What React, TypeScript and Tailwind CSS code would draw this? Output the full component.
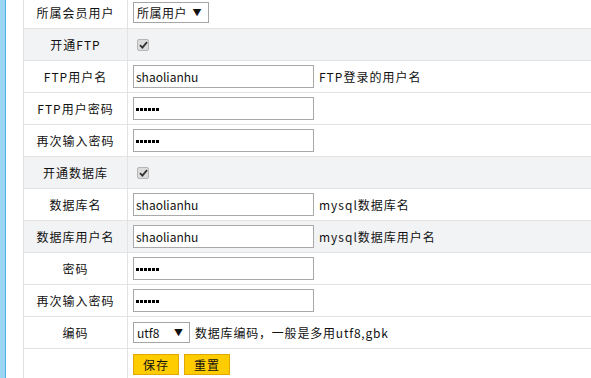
import React from 'react';

type Row = {
  label: string;
  kind: 'select' | 'check' | 'text' | 'password' | 'charset' | 'buttons';
  value?: string;
  hint?: string;
  gray?: boolean;
};

const rows: Row[] = [
  { label: '所属会员用户', kind: 'select', value: '所属用户' },
  { label: '开通FTP', kind: 'check', gray: true },
  { label: 'FTP用户名', kind: 'text', value: 'shaolianhu', hint: 'FTP登录的用户名' },
  { label: 'FTP用户密码', kind: 'password' },
  { label: '再次输入密码', kind: 'password' },
  { label: '开通数据库', kind: 'check', gray: true },
  { label: '数据库名', kind: 'text', value: 'shaolianhu', hint: 'mysql数据库名' },
  { label: '数据库用户名', kind: 'text', value: 'shaolianhu', hint: 'mysql数据库用户名', gray: true },
  { label: '密码', kind: 'password' },
  { label: '再次输入密码', kind: 'password' },
  { label: '编码', kind: 'charset', hint: '数据库编码，一般是多用utf8,gbk' },
  { label: '', kind: 'buttons' },
];

// tiny square dots like the old browser's password mask
const Dots = () => (
  <span className="flex gap-[1px] pt-[1px]">
    {[0, 1, 2, 3, 4, 5].map((d) => (
      <span key={d} className="h-[3px] w-[3px] bg-black" />
    ))}
  </span>
);

const Field: React.FC<{ row: Row }> = ({ row }) => {
  switch (row.kind) {
    case 'select':
      return (
        <div className="flex h-[21px] w-[76px] items-center justify-between border border-[#a5a5a5] bg-white pl-[3px] pr-[6px] tracking-[0.5px]">
          <span>{row.value}</span>
          <span className="text-[9px]">▼</span>
        </div>
      );
    case 'check':
      return (
        <span className="ml-[4px] flex h-[12px] w-[12px] items-center justify-center rounded-[2px] border border-[#b5b5b5] bg-[#dcdcdc]">
          <svg width="9" height="8" viewBox="0 0 9 8">
            <path d="M1 4.2 L3.4 6.6 L8 1.2" fill="none" stroke="#333" strokeWidth="1.8" />
          </svg>
        </span>
      );
    case 'text':
    case 'password':
      return (
        <div className="flex items-center">
          <div className="flex h-[23px] w-[181px] items-center border border-[#a9a9a9] bg-white px-[2px]">
            {row.kind === 'text' ? <span>{row.value}</span> : <Dots />}
          </div>
          {row.hint && <span className="ml-[5px] tracking-[1px]">{row.hint}</span>}
        </div>
      );
    case 'charset':
      return (
        <div className="flex items-center">
          <div className="flex h-[21px] w-[57px] items-center justify-between border border-[#a5a5a5] bg-white pl-[3px] pr-[6px]">
            <span>utf8</span>
            <span className="text-[9px]">▼</span>
          </div>
          <span className="ml-[5px] tracking-[0.8px]">{row.hint}</span>
        </div>
      );
    case 'buttons':
      return (
        <div className="flex gap-[5px]">
          <button className="h-[21px] w-[46px] border border-[#e1a800] bg-[#ffcc00] text-[12px] tracking-[1px]">保存</button>
          <button className="h-[21px] w-[46px] border border-[#e1a800] bg-[#ffcc00] text-[12px] tracking-[1px]">重置</button>
        </div>
      );
  }
};

export default function App() {
  return (
    <div
      className="flex h-[378px] w-[591px] overflow-hidden bg-white text-[12px] text-[#111]"
      style={{ fontFamily: '"Noto Sans CJK SC", "Liberation Sans", sans-serif' }}
    >
      <div className="w-[5px] bg-[#9dd5f5]" />
      <div className="w-[1px] bg-[#4fb0e8]" />
      <div className="w-[17px]" />
      <div className="mt-[-3px] flex-1 border-l border-[#e0e0e0]">
        {rows.map((row, i) => (
          <div
            key={i}
            className={`flex h-[32px] border-b border-[#e3e3e3] ${row.gray ? 'bg-[#f2f3f5]' : 'bg-white'}`}
          >
            <div className="flex w-[104px] items-center justify-center border-r border-[#e3e3e3] tracking-[1px]">
              {row.label}
            </div>
            <div className="flex flex-1 items-center pl-[5px]">
              <Field row={row} />
            </div>
          </div>
        ))}
      </div>
    </div>
  );
}
